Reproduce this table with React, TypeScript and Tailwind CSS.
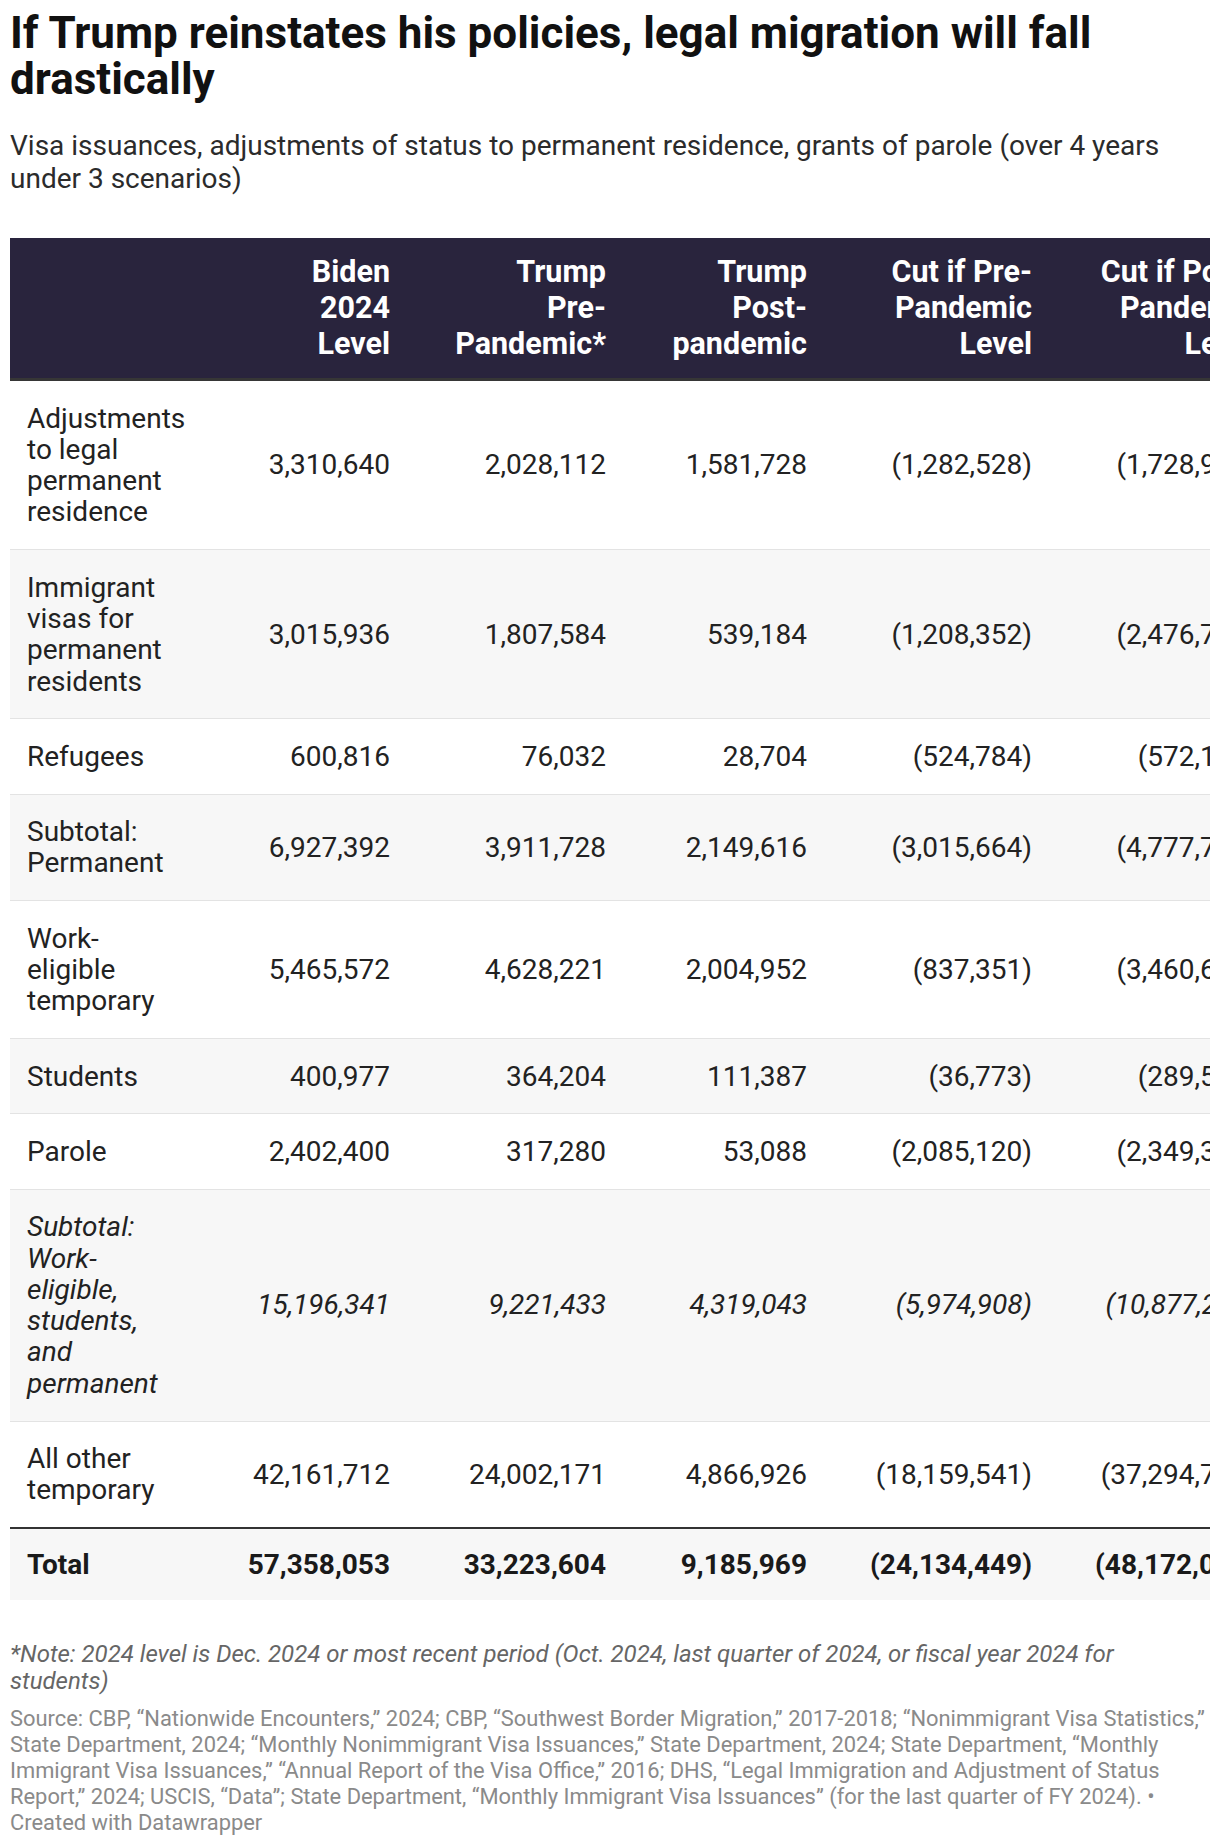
import * as React from 'react';

type Row = {
  label: string[];
  values: string[];
  italic?: boolean;
};

const rows: Row[] = [
  {
    label: ['Adjustments', 'to legal', 'permanent', 'residence'],
    values: ['3,310,640', '2,028,112', '1,581,728', '(1,282,528)', '(1,728,912)'],
  },
  {
    label: ['Immigrant', 'visas for', 'permanent', 'residents'],
    values: ['3,015,936', '1,807,584', '539,184', '(1,208,352)', '(2,476,752)'],
  },
  {
    label: ['Refugees'],
    values: ['600,816', '76,032', '28,704', '(524,784)', '(572,112)'],
  },
  {
    label: ['Subtotal:', 'Permanent'],
    values: ['6,927,392', '3,911,728', '2,149,616', '(3,015,664)', '(4,777,776)'],
  },
  {
    label: ['Work-', 'eligible', 'temporary'],
    values: ['5,465,572', '4,628,221', '2,004,952', '(837,351)', '(3,460,620)'],
  },
  {
    label: ['Students'],
    values: ['400,977', '364,204', '111,387', '(36,773)', '(289,590)'],
  },
  {
    label: ['Parole'],
    values: ['2,402,400', '317,280', '53,088', '(2,085,120)', '(2,349,312)'],
  },
  {
    label: ['Subtotal:', 'Work-', 'eligible,', 'students,', 'and', 'permanent'],
    values: ['15,196,341', '9,221,433', '4,319,043', '(5,974,908)', '(10,877,298)'],
    italic: true,
  },
  {
    label: ['All other', 'temporary'],
    values: ['42,161,712', '24,002,171', '4,866,926', '(18,159,541)', '(37,294,786)'],
  },
];

const totals = ['57,358,053', '33,223,604', '9,185,969', '(24,134,449)', '(48,172,084)'];

const headers: string[][] = [
  ['Biden', '2024', 'Level'],
  ['Trump', 'Pre-', 'Pandemic*'],
  ['Trump', 'Post-', 'pandemic'],
  ['Cut if Pre-', 'Pandemic', 'Level'],
  ['Cut if Post-', 'Pandemic', 'Level'],
];

// widths picked so the right edges of the numbers line up with the original
const colWidths = ['w-[174px]', 'w-[216px]', 'w-[201px]', 'w-[225px]', 'w-[225px]'];

function Lines({ lines }: { lines: string[] }) {
  return (
    <>
      {lines.map((l, i) => (
        <React.Fragment key={i}>
          {i > 0 && <br />}
          {l}
        </React.Fragment>
      ))}
    </>
  );
}

export default function App() {
  return (
    <div className="w-[1220px] bg-white px-[10px] pt-[11px] pb-[10px] font-['Roboto',sans-serif]">
      <h1 className="text-[44px] leading-[45.5px] font-bold text-[#111]">
        If Trump reinstates his policies, legal migration will fall drastically
      </h1>
      <p className="mt-[28px] text-[28px] leading-[32.5px] text-[#2b2b2b]">
        Visa issuances, adjustments of status to permanent residence, grants of parole (over 4 years under 3 scenarios)
      </p>

      <div className="mt-[43px] w-[1200px] overflow-hidden">
        <table className="table-fixed border-collapse w-[1255px] text-[28px] text-[#222]">
          <thead>
            <tr className="bg-[#29243d] border-b-[3px] border-[#363636]">
              <th className="w-[214px]" />
              {headers.map((h, i) => (
                <th
                  key={i}
                  className={`${colWidths[i]} pr-[8px] py-[16px] text-right align-bottom text-[30.5px] font-bold text-white leading-[36px] whitespace-nowrap`}
                >
                  <Lines lines={h} />
                </th>
              ))}
            </tr>
          </thead>
          <tbody>
            {rows.map((r, idx) => (
              <tr
                key={idx}
                className={`${idx % 2 === 1 ? 'bg-[#f7f7f7]' : 'bg-white'} ${
                  idx === rows.length - 1 ? '' : 'border-b border-[#e3e3e3]'
                } ${r.italic ? 'italic' : ''}`}
              >
                <td className="pl-[17px] pr-[8px] py-[21.5px] leading-[31.3px] align-middle whitespace-nowrap">
                  <Lines lines={r.label} />
                </td>
                {r.values.map((v, i) => (
                  <td
                    key={i}
                    className="pr-[8px] py-[21.5px] text-right leading-[31.3px] align-middle whitespace-nowrap"
                  >
                    {v}
                  </td>
                ))}
              </tr>
            ))}
            <tr className="bg-[#f7f7f7] border-t-[2px] border-[#333] font-bold text-[#1a1a1a]">
              <td className="pl-[17px] pr-[8px] py-[20px] leading-[31.3px] whitespace-nowrap">Total</td>
              {totals.map((v, i) => (
                <td key={i} className="pr-[8px] py-[20px] text-right leading-[31.3px] whitespace-nowrap">
                  {v}
                </td>
              ))}
            </tr>
          </tbody>
        </table>
      </div>

      <p className="mt-[41px] text-[24px] leading-[26.5px] italic text-[#666]">
        *Note: 2024 level is Dec. 2024 or most recent period (Oct. 2024, last quarter of 2024, or fiscal year 2024 for students)
      </p>
      <p className="mt-[12px] text-[21.9px] leading-[26px] text-[#8a8a8a]">
        Source: CBP, “Nationwide Encounters,” 2024; CBP, “Southwest Border Migration,” 2017-2018; “Nonimmigrant Visa Statistics,” State Department, 2024; “Monthly Nonimmigrant Visa Issuances,” State Department, 2024; State Department, “Monthly Immigrant Visa Issuances,” “Annual Report of the Visa Office,” 2016; DHS, “Legal Immigration and Adjustment of Status Report,” 2024; USCIS, “Data”; State Department, “Monthly Immigrant Visa Issuances” (for the last quarter of FY 2024). • Created with Datawrapper
      </p>
    </div>
  );
}
